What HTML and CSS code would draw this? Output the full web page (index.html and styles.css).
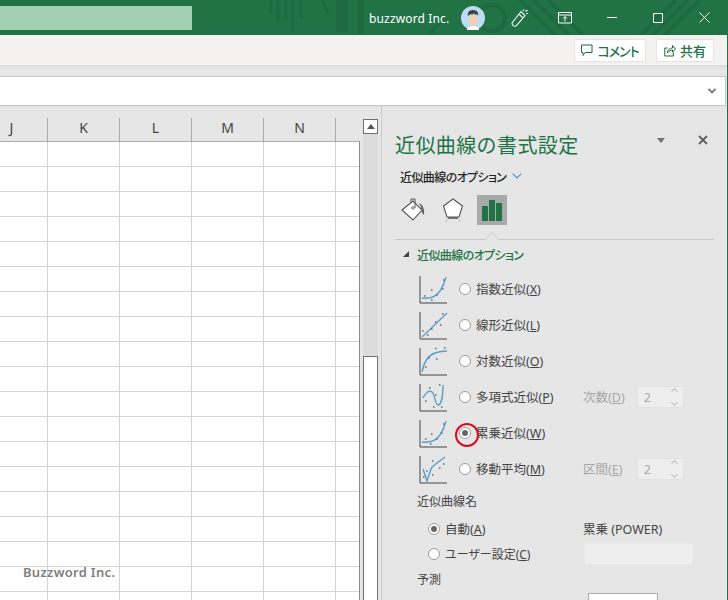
FILE: index.html
```html
<!DOCTYPE html>
<html lang="ja">
<head>
<meta charset="utf-8">
<title>近似曲線の書式設定</title>
<link rel="stylesheet" href="styles.css">
</head>
<body>
<header class="titlebar">
  <svg class="pattern" width="728" height="35" viewBox="0 0 728 35" fill="none">
    <g stroke="#1e6a40" stroke-width="2.5">
      <path d="M271 0v14M278 0v23M286 0v22M293 0v32M301 0v18M322 0l6 14"/>
    </g>
    <path d="M336 0h12v32h-12zM358 0h6v34h-6z" fill="#1e6a40"/>
    <g stroke="#1e6a40" stroke-width="4">
      <circle cx="492" cy="18" r="13"/>
      <path d="M520 0l36 36M534 0l36 36M548 0l36 36M640 36l36-36M652 36l36-36M664 36l36-36M430 35c4-8 8-12 12-14"/>
    </g>
  </svg>
  <div class="searchbox"></div>
  <div class="account">
    <span class="username">buzzword Inc.</span>
    <svg class="avatar" width="24" height="24" viewBox="0 0 24 24">
      <circle cx="12" cy="12" r="12" fill="#bcdcf2"/>
      <path d="M8 9h8v7c0 3-2 4-4 4s-4-1-4-4z" fill="#f2cdb4"/>
      <path d="M7 10c-1-3 1-6 5-6s6 3 5 6l-1-2-2 1-1-2-2 2-1-1-2 1z" fill="#3d4149"/>
      <path d="M6 24c0-3 3-4 6-4s6 1 6 4z" fill="#fff"/>
    </svg>
    <svg class="winicon pen" width="18" height="20" viewBox="0 0 18 20" fill="none" stroke="#fff" stroke-width="1.1">
      <path d="M1 15l7-9 4 4-7 8c-2 1-4-1-4-3zM8.500 5.500l1.500-2 4 4-2 2.500M13 1.500l-1 1.500M16.500 2l-2 1.500M17 5.500h-2"/>
    </svg>
    <svg class="winicon display" width="14" height="12" viewBox="0 0 14 12" fill="none" stroke="#fff">
      <path d="M.5.5h13v10.500H.5zM.5 3h13M7 9.500V4.500M5 6.500l2-2 2 2"/>
    </svg>
    <svg class="winicon minimize" width="10" height="2" viewBox="0 0 10 2"><path d="M0 .5h10" stroke="#fff"/></svg>
    <svg class="winicon maximize" width="10" height="10" viewBox="0 0 10 10" fill="none"><path d="M.5.5h9v9h-9z" stroke="#fff"/></svg>
    <svg class="winicon close" width="11" height="11" viewBox="0 0 11 11" fill="none"><path d="M.5.5l10 10M10.500.5l-10 10" stroke="#fff"/></svg>
  </div>
</header>

<div class="ribbon">
  <button class="ribbon-btn comment-btn">
    <svg width="12" height="13" viewBox="0 0 12 13" fill="none" stroke="#1e6a40"><path d="M.5 1h10.500v7.500H4l-2 3V8.500H.5z"/></svg>
    <span>コメント</span>
  </button>
  <button class="ribbon-btn share-btn">
    <svg width="12" height="13" viewBox="0 0 12 13" fill="none" stroke="#1e6a40"><path d="M3.500 4H.8v8h8.500V8M3.500 9c0-3 2-5 5-5V1.500L11.500 5l-3 3V6c-2 0-3.500 1-5 3z"/></svg>
    <span>共有</span>
  </button>
</div>

<div class="formula-band">
  <div class="formula">
    <svg width="10" height="6" viewBox="0 0 10 6" fill="none"><path d="M1.500 1L5 4.500 8.500 1" stroke="#7a7a7a" stroke-width="1.800"/></svg>
  </div>
</div>

<main class="workspace">
  <section class="sheet-area">
    <div class="col-headers">
      <span class="col-head col-j">J</span>
      <span class="col-head">K</span>
      <span class="col-head">L</span>
      <span class="col-head">M</span>
      <span class="col-head">N</span>
      <span class="col-head col-o"></span>
    </div>
    <div class="sheet-row">
      <div class="grid"><span class="watermark">Buzzword Inc.</span></div>
      <div class="scrollbar">
        <div class="scroll-up"><span class="tri-up"></span></div>
        <div class="scroll-track"></div>
        <div class="scroll-thumb"></div>
      </div>
    </div>
  </section>

  <aside class="panel">
    <div class="panel-head">
      <h1 class="panel-title">近似曲線の書式設定</h1>
      <span class="tri-down"></span>
      <svg class="panel-close" width="10" height="10" viewBox="0 0 10 10" fill="none"><path d="M1 1l8 8M9 1l-8 8" stroke="#5f5f5f" stroke-width="1.800"/></svg>
    </div>
    <div class="panel-sub">
      <span>近似曲線のオプション</span>
      <svg width="10" height="6" viewBox="0 0 10 6" fill="none"><path d="M.7.7L5 5 9.300.7" stroke="#4a90c8" stroke-width="1.100"/></svg>
    </div>
    <div class="tabs">
      <span class="tab">
        <svg width="26" height="26" viewBox="0 0 26 26" fill="none">
          <path d="M2 13L13 4l9 9-9 10z" fill="#fff" stroke="#555" stroke-width="1.100"/>
          <path d="M11 5l0-3h4v9" fill="none" stroke="#555"/>
          <circle cx="13" cy="11" r="1.300" fill="#fff" stroke="#555" stroke-width=".8"/>
          <path d="M19 6c3 1 6 5 5 12l-2-2-1-6z" fill="#666"/>
        </svg>
      </span>
      <span class="tab">
        <svg width="24" height="26" viewBox="0 0 24 26" fill="none">
          <path d="M12 2l9.500 7-3.500 11H6L2.500 9z" fill="#fff" stroke="#555" stroke-width="1.100"/>
          <path d="M7 21h10" stroke="#555" stroke-width="1.500"/>
          <path d="M6 22l-1 3M18 22l1 3" stroke="#bbb"/>
        </svg>
      </span>
      <span class="tab tab-active">
        <svg width="22" height="22" viewBox="0 0 22 22"><path d="M1 7h6v15H1zM8 1h6v21H8zM15 4h6v18h-6z" fill="#217346"/></svg>
      </span>
    </div>
    <div class="rule">
      <svg class="notch" width="14" height="8" viewBox="0 0 14 8"><path d="M0 8L7 .5 14 8" fill="#e6e6e6" stroke="#c8c8c8"/></svg>
    </div>
    <div class="section-head">
      <span class="tri-corner"></span>
      <span>近似曲線のオプション</span>
    </div>

    <ul class="trend-list">
      <li class="trend">
        <svg class="chart" width="29" height="29" viewBox="0 0 29 29" fill="none">
          <path class="axes" d="M1 1v27h27"/>
          <path class="curve" d="M3 23c8 1 14-1 18-7s5-10 6-14"/>
          <path class="dots" d="M5 21h1.500M12 25h1.500M12 15h1.500M17 20h1.500M23 14h1.500M24 5h1.500"/>
        </svg>
        <span class="radio"></span><span class="label">指数近似(<u>X</u>)</span>
      </li>
      <li class="trend">
        <svg class="chart" width="29" height="29" viewBox="0 0 29 29" fill="none">
          <path class="axes" d="M1 1v27h27"/>
          <path class="curve" d="M3 26L28 2"/>
          <path class="dots" d="M3 20h1.500M8 24h1.500M12 18h1.500M16 11h1.500M21 14h1.500M23 3h1.500"/>
        </svg>
        <span class="radio"></span><span class="label">線形近似(<u>L</u>)</span>
      </li>
      <li class="trend">
        <svg class="chart" width="29" height="29" viewBox="0 0 29 29" fill="none">
          <path class="axes" d="M1 1v27h27"/>
          <path class="curve" d="M3 25c2-10 7-17 13-19s8-2 12-2"/>
          <path class="dots" d="M6 20h1.500M9 11h1.500M16 1.500h1.500M17 12h1.500M25 1h1.500"/>
        </svg>
        <span class="radio"></span><span class="label">対数近似(<u>O</u>)</span>
      </li>
      <li class="trend has-extra">
        <svg class="chart" width="29" height="29" viewBox="0 0 29 29" fill="none">
          <path class="axes" d="M1 1v27h27"/>
          <path class="curve" d="M4 15c3-6 6-8 9-6s3 13 6 13 5-8 5-20"/>
          <path class="dots" d="M6 18h1.500M10 5h1.500M14 24h1.500M16 12h1.500M20 2h1.500M22 24h1.500"/>
        </svg>
        <span class="radio"></span><span class="label">多項式近似(<u>P</u>)</span>
        <span class="extra-label">次数(<u>D</u>)</span>
        <span class="spin"><span>2</span><span class="spin-arrows"><i class="chev up"></i><i class="chev down"></i></span></span>
      </li>
      <li class="trend">
        <svg class="chart" width="29" height="29" viewBox="0 0 29 29" fill="none">
          <path class="axes" d="M1 1v27h27"/>
          <path class="curve" d="M3 23c8 1 14-1 18-7s5-10 6-14"/>
          <path class="dots" d="M6 20h1.500M11 25h1.500M12 15h1.500M17 20h1.500M22 14h1.500M24 5h1.500"/>
        </svg>
        <span class="radio radio-on radio-marked"></span><span class="label">累乗近似(<u>W</u>)</span>
      </li>
      <li class="trend has-extra">
        <svg class="chart" width="29" height="29" viewBox="0 0 29 29" fill="none">
          <path class="axes" d="M1 1v27h27"/>
          <path class="curve" d="M4 14l4 12 4-12c1-3 4-4 6-6l8-6"/>
          <path class="dots" d="M4 22h1.500M7 16h1.500M13 20h1.500M13 6h1.500M20 13h1.500M24 9h1.500"/>
        </svg>
        <span class="radio"></span><span class="label">移動平均(<u>M</u>)</span>
        <span class="extra-label">区間(<u>E</u>)</span>
        <span class="spin"><span>2</span><span class="spin-arrows"><i class="chev up"></i><i class="chev down"></i></span></span>
      </li>
    </ul>

    <div class="group-label name-label">近似曲線名</div>
    <div class="name-grid">
      <label class="opt"><span class="radio radio-on"></span><span class="opt-wide">自動(<u>A</u>)</span></label>
      <span class="auto-name">累乗 (POWER)</span>
      <label class="opt"><span class="radio"></span><span>ユーザー設定(<u>C</u>)</span></label>
      <span class="name-input"></span>
    </div>
    <div class="group-label forecast-label">予測</div>
    <div class="forecast-row"><span class="forecast-input"></span></div>
  </aside>
</main>
</body>
</html>
```
FILE: styles.css
```css
* { box-sizing: border-box; }
html, body { margin: 0; padding: 0; height: 600px; overflow: hidden; }
body {
  width: 728px;
  background: #e6e6e6;
  font-family: "Noto Sans", "Noto Sans CJK JP", "Liberation Sans", sans-serif;
  font-feature-settings: "palt";
  font-size: 12px;
  color: #444;
  display: flex;
  flex-direction: column;
  border-right: 1px solid #217346;
}
svg { display: block; flex: none; }
ul { list-style: none; margin: 0; padding: 0; }
h1 { margin: 0; font-weight: normal; }

/* Title bar */
.titlebar {
  height: 35px;
  flex: none;
  background: #217346;
  position: relative;
  display: flex;
  align-items: flex-start;
  justify-content: space-between;
  overflow: hidden;
  margin-right: -1px;
}
.pattern { position: absolute; left: 0; top: 0; }
.searchbox {
  position: relative;
  width: 192px;
  height: 24px;
  margin-top: 6px;
  background: #a3d0b5;
}
.account {
  position: relative;
  display: flex;
  align-items: center;
  height: 35px;
}
.username {
  font-size: 12px;
  letter-spacing: .15px;
  color: #fff;
  width: 92px;
  margin-top: 1px;
}
.avatar { margin-right: 26px; margin-top: 1px; }
.pen { margin-right: 29px; }
.display { margin-right: 35px; }
.minimize { margin-right: 36px; }
.maximize { margin-right: 36px; }
.close { margin-right: 18px; }

/* Ribbon */
.ribbon {
  height: 30px;
  flex: none;
  background: #f3f2f1;
  display: flex;
  justify-content: flex-end;
  align-items: flex-start;
  gap: 10px;
  padding: 4px 13px 0 0;
  position: relative;
}
.ribbon-btn {
  height: 23px;
  display: flex;
  align-items: center;
  justify-content: center;
  gap: 4px;
  padding: 0;
  border: 1px solid #e6e4e2;
  border-radius: 2px;
  background: #fff;
  color: #217346;
  font: 500 13px "Noto Sans CJK JP", sans-serif;
  font-feature-settings: "palt";
}
.comment-btn { width: 72px; letter-spacing: -1px; }
.share-btn { width: 58px; }

/* Formula band */
.formula-band {
  height: 53px;
  flex: none;
  padding-top: 11px;
  background: linear-gradient(#dcdcdc, #e9e9e9 6px, #e6e6e6 11px);
}
.formula {
  height: 30px;
  margin-right: 1px;
  background: #fff;
  border: 1px solid #c6c6c6;
  border-left: none;
  display: flex;
  align-items: center;
  justify-content: flex-end;
  padding-right: 8px;
}

/* Workspace */
.workspace { flex: 1; min-height: 0; display: flex; }
.sheet-area {
  width: 382px;
  flex: none;
  border-right: 1px solid #c8c8c8;
  display: flex;
  flex-direction: column;
  overflow: hidden;
  margin-top: -12px;
  padding-top: 12px;
}
.col-headers {
  height: 23px;
  flex: none;
  display: flex;
  margin-left: -24px;
  color: #444;
}
.col-head {
  width: 72px;
  flex: none;
  text-align: center;
  line-height: 20px;
  border-right: 1px solid #ababab;
  font-size: 14px;
}
.col-o { width: 24px; border-right: none; }
.sheet-row { flex: 1; display: flex; min-height: 0; }
.grid {
  width: 360px;
  flex: none;
  position: relative;
  background-color: #fff;
  background-image:
    linear-gradient(to right, #d4d4d4 1px, transparent 1px),
    linear-gradient(to bottom, #d4d4d4 1px, transparent 1px);
  background-size: 72px 25px;
  background-position: 47px 24px;
  border-top: 1px solid #ababab;
  border-right: 1px solid #8c8c8c;
}
.watermark {
  position: absolute;
  left: 23px;
  top: 421px;
  font-size: 13px;
  font-weight: 600;
  letter-spacing: .3px;
  color: #808080;
}
.scrollbar {
  width: 21px;
  flex: none;
  position: relative;
  margin-left: 3px;
  background: #e6e6e6;
}
.scroll-up {
  position: absolute;
  left: 0;
  top: -22px;
  width: 15px;
  height: 15px;
  background: #fff;
  border: 1px solid #707070;
  display: flex;
  align-items: center;
  justify-content: center;
}
.tri-up {
  width: 0;
  height: 0;
  border-left: 4px solid transparent;
  border-right: 4px solid transparent;
  border-bottom: 5px solid #555;
}
.scroll-track {
  position: absolute;
  left: 0;
  top: -7px;
  bottom: 0;
  width: 15px;
  background: #dcdcdc;
}
.scroll-thumb {
  position: absolute;
  left: 0;
  top: 215px;
  bottom: -2px;
  width: 15px;
  background: #fff;
  border: 1px solid #707070;
}

/* Panel */
.panel {
  flex: 1;
  min-width: 0;
  margin-top: -12px;
  padding-left: 13px;
  position: relative;
  overflow: hidden;
  background: #e6e6e6;
}
.panel-head {
  display: flex;
  align-items: center;
  height: 28px;
  margin-top: 24px;
}
.panel-title {
  width: 262px;
  font-family: "Noto Sans CJK JP", sans-serif;
  font-feature-settings: normal;
  font-size: 20px;
  letter-spacing: .4px;
  font-weight: 400;
  color: #217346;
  white-space: nowrap;
}
.tri-down {
  width: 0;
  height: 0;
  border-left: 4.500px solid transparent;
  border-right: 4.500px solid transparent;
  border-top: 5px solid #707070;
  margin-right: 33px;
  margin-top: -7px;
}
.panel-close { margin-top: -9px; }
.panel-sub {
  display: flex;
  align-items: center;
  gap: 6px;
  height: 18px;
  margin-top: 9px;
  padding-left: 5px;
  color: #262626;
  font-weight: 500;
  font-family: "Noto Sans CJK JP", sans-serif;
  font-size: 12px;
  letter-spacing: -.6px;
}
.tabs {
  display: flex;
  align-items: center;
  gap: 9.5px;
  margin-top: 10px;
  margin-left: 3px;
  height: 30px;
}
.tab {
  width: 30px;
  height: 30px;
  display: flex;
  align-items: center;
  justify-content: center;
}
.tab-active { background: #a9a9a9; }
.rule {
  position: relative;
  height: 1px;
  margin-top: 14px;
  width: 319px;
  background: #c8c8c8;
}
.notch { position: absolute; left: 90px; top: -7px; }
.section-head {
  display: flex;
  align-items: center;
  gap: 8px;
  margin-top: 6px;
  height: 16px;
  padding-left: 8px;
  color: #217346;
  font-weight: 500;
  font-family: "Noto Sans CJK JP", sans-serif;
  font-size: 12px;
  letter-spacing: -.6px;
}
.tri-corner {
  width: 0;
  height: 0;
  border-left: 6px solid transparent;
  border-bottom: 6px solid #444;
}
.trend-list { margin-top: 9px; padding-left: 24px; }
.trend {
  height: 36px;
  display: flex;
  align-items: center;
  color: #444;
}
.axes { stroke: #444; }
.curve { stroke: #5a9fd0; stroke-width: 1.4; }
.dots { stroke: #666; stroke-width: 1.4; }
.radio {
  position: relative;
  width: 12px;
  height: 12px;
  flex: none;
  border-radius: 50%;
  background: #fff;
  border: 1px solid #9a9a9a;
}
.chart + .radio { margin-left: 11px; }
.label { margin: -2px 0 0 5px; width: 107px; white-space: nowrap; font-size: 12.500px; }
.radio-on::after {
  content: "";
  position: absolute;
  left: 2px;
  top: 2px;
  width: 6px;
  height: 6px;
  border-radius: 50%;
  background: #666;
}
.radio-marked::before {
  content: "";
  position: absolute;
  left: -5px;
  top: -5px;
  width: 20px;
  height: 20px;
  border-radius: 50%;
  border: 2.5px solid #d0121f;
}
.extra-label { margin-top: -2px; color: #a6a6a6; width: 54px; white-space: nowrap; font-size: 12.500px; }
.spin {
  width: 47px;
  height: 22px;
  background: #eeeeee;
  border: 1px solid #e2e2e2;
  color: #a6a6a6;
  display: flex;
  align-items: center;
  justify-content: space-between;
  padding: 0 6px;
}
.spin-arrows { display: flex; flex-direction: column; gap: 6px; }
.chev {
  display: block;
  width: 5px;
  height: 5px;
  border-left: 1px solid #bdbdbd;
  border-top: 1px solid #bdbdbd;
}
.chev.up { transform: rotate(45deg); margin-top: 2px; }
.chev.down { transform: rotate(225deg); margin-bottom: 2px; }
.group-label { padding-left: 22px; height: 18px; line-height: 18px; color: #444; }
.name-label { margin-top: 6px; }
.name-grid {
  display: grid;
  grid-template-columns: 155px 110px;
  grid-auto-rows: 25px;
  margin-top: 5px;
  padding-left: 33px;
  align-items: center;
}
.opt { display: flex; align-items: center; gap: 5px; white-space: nowrap; }
.opt-wide { font-size: 12.500px; }
.auto-name { white-space: nowrap; font-size: 12.500px; }
.name-input { height: 22px; width: 109px; margin-left: 1px; background: #eeeeee; border: 1px solid #e8e8e8; }
.forecast-label { margin-top: 5px; }
.forecast-row { padding-left: 193px; margin-top: 4px; }
.forecast-input { display: block; width: 70px; height: 20px; background: #fff; border: 1px solid #ababab; }
```
